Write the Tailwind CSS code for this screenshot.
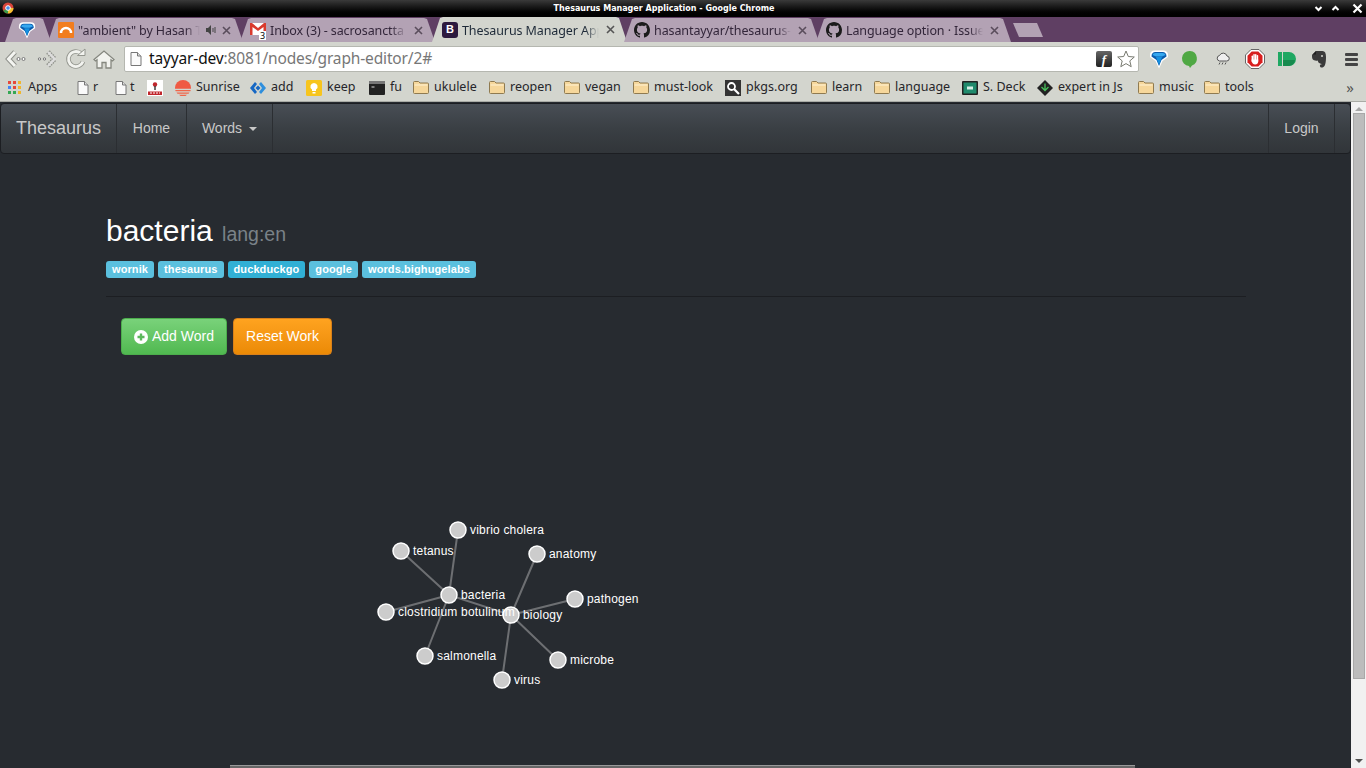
<!DOCTYPE html>
<html lang="en">
<head>
    <meta charset="UTF-8">
    <title>Thesaurus Manager Application</title>
    <script src="https://cdn.jsdelivr.net/npm/@tailwindcss/browser@4"></script>
</head>
<body class="w-[1366px] h-[768px] overflow-hidden bg-[#272b30] font-['Noto_Sans',sans-serif]">
    <svg class="hidden">
        <symbol id="folder" viewBox="0 0 16 16">
            <path d="M.5 12.500v-10a1 1 0 0 1 1-1h4l1.500 1.500h7.500a1 1 0 0 1 1 1v8.500a1 1 0 0 1-1 1h-13a1 1 0 0 1-1-1z" fill="#f6d79b" stroke="#8f7a50"/>
            <path d="M1.500 5h13" stroke="#fff2d4"/>
        </symbol>
        <symbol id="page" viewBox="0 0 16 16">
            <path d="M3 1.500h6.500l3.500 3.500v9.500h-10z" fill="#fafafa" stroke="#777"/>
            <path d="M9.500 1.500v3.500h3.500" fill="#ddd" stroke="#777"/>
        </symbol>
        <symbol id="github" viewBox="0 0 16 16">
            <path fill="#1b1b1b" d="M8 0C3.580 0 0 3.580 0 8c0 3.540 2.290 6.530 5.470 7.590.4.070.55-.17.55-.38 0-.19-.01-.82-.01-1.490-2.010.37-2.530-.49-2.690-.94-.09-.23-.48-.94-.82-1.130-.28-.15-.68-.52-.01-.53.63-.01 1.080.58 1.230.82.720 1.210 1.870.87 2.330.66.070-.52.280-.87.510-1.070-1.780-.2-3.640-.89-3.640-3.950 0-.87.310-1.590.820-2.150-.080-.2-.360-1.020.080-2.120 0 0 .67-.21 2.200.82.640-.18 1.320-.27 2-.27s1.360.09 2 .27c1.530-1.040 2.200-.82 2.200-.82.440 1.100.160 1.920.080 2.120.510.560.820 1.270.820 2.150 0 3.070-1.870 3.750-3.650 3.950.290.250.540.730.540 1.480 0 1.070-.010 1.930-.010 2.200 0 .210.150.460.550.380A8.010 8.010 0 0 0 16 8c0-4.420-3.580-8-8-8z"/>
        </symbol>
        <symbol id="gem" viewBox="0 0 20 20">
            <path d="M10 19.500L6.500 12 1 8V6q0-4.500 5-4.500h8q5 0 5 4.500v2l-5.500 4z" fill="#fff"/>
            <path d="M10 17L7.500 11 2.500 7.500q0-4.500 4-4.500h7q4 0 4 4.500L12.500 11z" fill="#0b5cad"/>
            <path d="M3.500 6q.5-2 3-2h7q2.500 0 3 2l-3.500 1.500h-6z" fill="#35a8f0"/>
            <path d="M7 8h6l-3 8z" fill="#1590e0"/>
        </symbol>
    </svg>

    <!-- title bar -->
    <div class="relative flex h-[17px] items-center justify-center bg-gradient-to-b from-[#3a3a3a] via-[#111] to-[#000] pr-[38px] font-['DejaVu_Sans',sans-serif] text-[8px] font-bold text-white">
        <svg class="absolute left-[2px] top-[2px] size-[12px]" viewBox="0 0 12 12">
            <circle cx="6" cy="6" r="5.500" fill="#d9453a"/>
            <path d="M6 6L1.200 8.800A5.500 5.500 0 0 0 6 11.500z" fill="#3a9a4a"/>
            <path d="M6 6v5.500A5.500 5.500 0 0 0 11.500 6z" fill="#f2c230"/>
            <circle cx="6" cy="6" r="2.300" fill="#4a8ee8" stroke="#fff"/>
        </svg>
        <span>Thesaurus Manager Application - Google Chrome</span>
        <div class="absolute right-[3px] top-[3px] flex items-center gap-[8px]">
            <svg class="size-[9px]" viewBox="0 0 9 9"><path d="M1.500 3l3 3 3-3" fill="none" stroke="#fff" stroke-width="2"/></svg>
            <svg class="size-[9px]" viewBox="0 0 9 9"><path d="M1.500 6l3-3 3 3" fill="none" stroke="#fff" stroke-width="2"/></svg>
            <svg class="ml-[4px] size-[11px]" viewBox="0 0 11 11"><path d="M1.500 1.500l8 8m0-8l-8 8" fill="none" stroke="#fff" stroke-width="2.200"/></svg>
        </div>
    </div>

    <!-- tab strip -->
    <div class="flex h-[25px] items-end bg-[#5f3f63] pl-[5px] text-[12.500px] tracking-[-0.1px] text-[#33263a]">
        <div class="flex h-[24px] w-[46px] items-center justify-center bg-[#b3a2b4] [clip-path:polygon(0_100%,8px_4%,11px_0,calc(100%-11px)_0,calc(100%-8px)_4%,100%_100%)]">
            <svg class="-ml-[2px] size-[18px]"><use href="#gem"/></svg>
        </div>
        <div class="-ml-[3px] flex h-[24px] w-[195px] items-center bg-[#b3a2b4] pl-[10px] [clip-path:polygon(0_100%,8px_4%,11px_0,calc(100%-11px)_0,calc(100%-8px)_4%,100%_100%)]">
            <svg class="mr-[4px] size-[16px] shrink-0" viewBox="0 0 16 16">
                <rect width="16" height="16" rx="1" fill="#f27d1e"/>
                <path d="M3 11a5 5 0 0 1 10 0" fill="none" stroke="#fff" stroke-width="2.500"/>
            </svg>
            <span class="mt-[2px] w-[122px] overflow-hidden whitespace-nowrap [mask-image:linear-gradient(to_right,#000_88%,transparent)]">"ambient" by Hasan T</span>
            <svg class="ml-[5px] size-[12px] shrink-0" viewBox="0 0 12 12"><path d="M1 4h2l3-3v10l-3-3H1z" fill="#444"/><path d="M8 4v4m2-5v6" stroke="#444"/></svg>
            <svg class="ml-[5px] size-[9px] shrink-0" viewBox="0 0 9 9"><path d="M1 1l7 7m0-7l-7 7" stroke="#5a4d5c" stroke-width="1.600"/></svg>
        </div>
        <div class="-ml-[3px] flex h-[24px] w-[195px] items-center bg-[#b3a2b4] pl-[10px] [clip-path:polygon(0_100%,8px_4%,11px_0,calc(100%-11px)_0,calc(100%-8px)_4%,100%_100%)]">
            <div class="relative mr-[4px] size-[16px] shrink-0">
                <svg class="size-[16px]" viewBox="0 0 16 16"><rect y="1" width="16" height="12" fill="#fff"/><path d="M0 1v12h2.500V5L8 9l5.500-4v8H16V1h-2L8 6 2 1z" fill="#d93a2e"/></svg>
                <span class="absolute -bottom-[2px] right-0 bg-white px-[1px] text-[9px] leading-[9px] text-black">3</span>
            </div>
            <span class="mt-[2px] w-[137px] overflow-hidden whitespace-nowrap [mask-image:linear-gradient(to_right,#000_88%,transparent)]">Inbox (3) - sacrosanctta</span>
            <svg class="ml-[7px] size-[9px] shrink-0" viewBox="0 0 9 9"><path d="M1 1l7 7m0-7l-7 7" stroke="#5a4d5c" stroke-width="1.600"/></svg>
        </div>
        <div class="-ml-[3px] flex h-[25px] w-[195px] items-center bg-[#d3d5ce] pl-[10px] text-[#1e2a38] [clip-path:polygon(0_100%,8px_4%,11px_0,calc(100%-11px)_0,calc(100%-8px)_4%,100%_100%)]">
            <span class="mr-[4px] flex size-[16px] shrink-0 items-center justify-center rounded-[3px] bg-[#2d1a3f] font-['Liberation_Sans',sans-serif] text-[11px] font-bold text-white">B</span>
            <span class="mt-[3px] w-[137px] overflow-hidden whitespace-nowrap [mask-image:linear-gradient(to_right,#000_90%,transparent)]">Thesaurus Manager App</span>
            <svg class="ml-[7px] size-[9px] shrink-0" viewBox="0 0 9 9"><path d="M1 1l7 7m0-7l-7 7" stroke="#555" stroke-width="1.600"/></svg>
        </div>
        <div class="-ml-[3px] flex h-[24px] w-[195px] items-center bg-[#b3a2b4] pl-[10px] [clip-path:polygon(0_100%,8px_4%,11px_0,calc(100%-11px)_0,calc(100%-8px)_4%,100%_100%)]">
            <svg class="mr-[4px] size-[16px] shrink-0"><use href="#github"/></svg>
            <span class="mt-[2px] w-[137px] overflow-hidden whitespace-nowrap [mask-image:linear-gradient(to_right,#000_90%,transparent)]">hasantayyar/thesaurus-m</span>
            <svg class="ml-[7px] size-[9px] shrink-0" viewBox="0 0 9 9"><path d="M1 1l7 7m0-7l-7 7" stroke="#5a4d5c" stroke-width="1.600"/></svg>
        </div>
        <div class="-ml-[3px] flex h-[24px] w-[195px] items-center bg-[#b3a2b4] pl-[10px] [clip-path:polygon(0_100%,8px_4%,11px_0,calc(100%-11px)_0,calc(100%-8px)_4%,100%_100%)]">
            <svg class="mr-[4px] size-[16px] shrink-0"><use href="#github"/></svg>
            <span class="mt-[2px] w-[137px] overflow-hidden whitespace-nowrap [mask-image:linear-gradient(to_right,#000_90%,transparent)]">Language option · Issue</span>
            <svg class="ml-[7px] size-[9px] shrink-0" viewBox="0 0 9 9"><path d="M1 1l7 7m0-7l-7 7" stroke="#5a4d5c" stroke-width="1.600"/></svg>
        </div>
        <div class="mb-[5px] ml-[2px] h-[14px] w-[30px] bg-[#b3a2b4] [clip-path:polygon(6px_100%,0_0,calc(100%-6px)_0,100%_100%)]"></div>
    </div>

    <!-- toolbar -->
    <div class="flex h-[32px] items-center bg-[#d3d5ce] pl-[5px] pt-[2px]">
        <svg class="size-[22px]" viewBox="0 0 22 22" fill="none"><path d="M10 4l-6.500 7 6.500 7" stroke="#8f918b" stroke-width="5"/><path d="M10 4l-6.500 7 6.500 7" stroke="#f4f5f1" stroke-width="3"/><circle cx="13.500" cy="11" r="1.500" fill="#fff" stroke="#777"/><circle cx="18.500" cy="11" r="1.500" fill="#fff" stroke="#777"/></svg>
        <svg class="ml-[9px] size-[22px]" viewBox="0 0 22 22" fill="none"><path d="M12 4l6.500 7-6.500 7" stroke="#8f918b" stroke-width="5" stroke-dasharray="1.500 1"/><path d="M12 4l6.500 7-6.500 7" stroke="#ddd" stroke-width="2.500"/><circle cx="3.500" cy="11" r="1.200" fill="#eee" stroke="#777"/><circle cx="8.500" cy="11" r="1.200" fill="#eee" stroke="#777"/></svg>
        <svg class="ml-[7px] size-[22px]" viewBox="0 0 22 22" fill="none"><path d="M18 13.500A7.500 7.500 0 1 1 16 5.500" stroke="#94968f" stroke-width="4.500"/><path d="M18 13.500A7.500 7.500 0 1 1 16 5.500" stroke="#f2f3ef" stroke-width="2.800"/><path d="M12.500 7.500h7.500V1z" fill="#f2f3ef" stroke="#94968f"/></svg>
        <svg class="ml-[6px] size-[22px]" viewBox="0 0 22 22" fill="none"><path d="M1 11.500L11 3l10 8.500-1.500 1.500L18 11.800V20h-5v-5.500H9V20H4v-8.200L2.500 13z" fill="#f2f3ef" stroke="#85877f" stroke-width="1.300"/></svg>
        <div class="ml-[9px] flex h-[26px] w-[1015px] items-center rounded-[2px] border border-[#b5b7b0] bg-white pl-[3px] pr-[3px]">
            <svg class="size-[16px] shrink-0"><use href="#page"/></svg>
            <span class="ml-[5px] whitespace-nowrap text-[15.500px] tracking-[-0.15px] text-[#111]">tayyar-dev<span class="text-[#777]">:8081/nodes/graph-editor/2#</span></span>
            <span class="ml-auto flex size-[16px] items-center justify-center rounded-[2px] bg-gradient-to-b from-[#666] to-[#222] font-['Liberation_Serif',serif] text-[13px] font-bold italic leading-none text-white">f</span>
            <svg class="ml-[5px] size-[18px]" viewBox="0 0 18 18"><path d="M9 1l2.300 5.500 6 .5-4.500 3.900 1.400 5.800L9 13.600l-5.200 3.100 1.400-5.800L.7 7l6-.5z" fill="#fff" stroke="#77796f"/></svg>
        </div>
        <svg class="ml-[10px] size-[20px]"><use href="#gem"/></svg>
        <svg class="ml-[12px] size-[18px]" viewBox="0 0 18 18"><path d="M9 1a7.500 7.500 0 0 0-1 15l1 2 2-2.500A7.500 7.500 0 0 0 9 1z" fill="#4fa843"/></svg>
        <svg class="ml-[17px] size-[14px]" viewBox="0 0 14 14" fill="none"><path d="M3.500 9h7a2.500 2.500 0 0 0 .5-5 4 4 0 0 0-7.500-.5A2.800 2.800 0 0 0 3.500 9z" fill="#eee" stroke="#555"/><path d="M4 10.500l-1 2m4-2l-1 2m4-2l-1 2" stroke="#555"/></svg>
        <svg class="ml-[15px] size-[20px]" viewBox="0 0 20 20">
            <path d="M6 .5h8L19.500 6v8L14 19.500H6L.5 14V6z" fill="#fff" stroke="#666"/>
            <path d="M6.700 2.500h6.600l4.200 4.200v6.600l-4.200 4.200H6.700l-4.200-4.200V6.700z" fill="#d81e1e"/>
            <g fill="#fff"><rect x="6.600" y="6.500" width="1.500" height="6" rx=".7"/><rect x="8.300" y="5" width="1.500" height="7" rx=".7"/><rect x="10" y="5" width="1.500" height="7" rx=".7"/><rect x="11.700" y="6" width="1.500" height="7" rx=".7"/><path d="M6.600 10.500h6.600v2c0 2-1.300 3-3 3-2 0-2.700-1-3.600-3z"/></g>
        </svg>
        <svg class="ml-[12px] size-[20px]" viewBox="0 0 20 20"><path d="M1 3h4v14H1zM6 3h6a7 7 0 0 1 0 14H6z" fill="#1fa862"/><path d="M6 11h12a7 7 0 0 1-6 6H6z" fill="#178a4e"/></svg>
        <svg class="ml-[13px] size-[18px]" viewBox="0 0 18 18"><path d="M2.500 4.500L6 1h6.500C15 1 16 3 16 7c0 4.500-.5 10-3.500 10.500-2 .3-3-1-2.500-2.300.4-1 1.500-1 2.300-.5-.3-1.200-2.500-1-3.600-2-.5-.5-.7-1.500-.9-2.200-1.800.4-4.300.2-5.300-1.500-.5-1-.5-3-.5-4.500z" fill="#3a3a3a"/><path d="M6 1v3.500H2.500z" fill="#1e1e1e"/><circle cx="12" cy="6" r="1" fill="#d3d5ce"/></svg>
        <div class="ml-[17px] flex w-[13px] flex-col gap-[2px]">
            <span class="h-[3px] rounded-[1px] bg-[#444]"></span>
            <span class="h-[3px] rounded-[1px] bg-[#444]"></span>
            <span class="h-[3px] rounded-[1px] bg-[#444]"></span>
        </div>
    </div>

    <!-- bookmarks bar -->
    <div class="flex h-[28px] items-center border-b border-[#a9aba5] bg-[#d3d5ce] pl-[8px] text-[12.500px] text-[#26262a]">
        <div class="flex w-[67px] items-center gap-[7px]">
            <svg class="size-[13px]" viewBox="0 0 13 13">
                <rect width="3" height="3" fill="#e5483a"/><rect x="5" width="3" height="3" fill="#e5483a"/><rect x="10" width="3" height="3" fill="#f0b62c"/>
                <rect y="5" width="3" height="3" fill="#4285f4"/><rect x="5" y="5" width="3" height="3" fill="#e5483a"/><rect x="10" y="5" width="3" height="3" fill="#f0b62c"/>
                <rect y="10" width="3" height="3" fill="#34a853"/><rect x="5" y="10" width="3" height="3" fill="#34a853"/><rect x="10" y="10" width="3" height="3" fill="#f0b62c"/>
            </svg>
            <span>Apps</span>
        </div>
        <div class="flex w-[38px] items-center gap-[2px]"><svg class="size-[16px]"><use href="#page"/></svg><span>r</span></div>
        <div class="flex w-[34px] items-center gap-[1px]"><svg class="size-[16px]"><use href="#page"/></svg><span>t</span></div>
        <svg class="size-[16px]" viewBox="0 0 16 16"><rect width="16" height="16" fill="#fff"/><circle cx="8" cy="4.500" r="2.200" fill="#c0272d"/><path d="M7.300 6h1.400v4H7.300z" fill="#333"/><path d="M1 11.500h14V15H1z" fill="#c0272d"/><path d="M3 13h10" stroke="#fff" stroke-dasharray="2 1"/></svg>
        <div class="ml-[12px] flex w-[75px] items-center gap-[5px]">
            <svg class="size-[16px]" viewBox="0 0 16 16"><path d="M0 8a8 8 0 0 1 16 0v.800H0z" fill="#ef5a43"/><path d="M.2 10h15.600l-.5 1.300H.7zM1.500 12.500h13l-1 1.200h-11zM4 14.700h8L10.500 16h-5z" fill="#f0664a"/></svg>
            <span>Sunrise</span>
        </div>
        <div class="flex w-[55px] items-center gap-[5px]">
            <svg class="size-[16px]" viewBox="0 0 16 16"><path d="M5 2L0 8l5 6 2-2-3-4 3-4z" fill="#1668c4"/><path d="M11 2l5 6-5 6-2-2 3-4-3-4z" fill="#2e8fdd"/><path d="M8 5.500L10.500 8 8 10.500 5.500 8z" fill="#1668c4"/></svg>
            <span>add</span>
        </div>
        <div class="ml-[1px] flex w-[63px] items-center gap-[5px]">
            <svg class="size-[16px]" viewBox="0 0 16 16"><rect width="16" height="16" rx="1.500" fill="#f7c51d"/><path d="M8 3a3.600 3.600 0 0 0-2 6.600V11h4V9.600A3.600 3.600 0 0 0 8 3zM6.500 12h3v1.500h-3z" fill="#fff"/></svg>
            <span>keep</span>
        </div>
        <div class="flex w-[44px] items-center gap-[5px]">
            <svg class="size-[16px]" viewBox="0 0 16 16"><rect y="1" width="16" height="14" rx="1" fill="#222"/><rect y="1" width="16" height="3" fill="#777"/><path d="M2.500 6.500h3v1h-3z" fill="#ddd"/></svg>
            <span>fu</span>
        </div>
        <div class="flex w-[76px] items-center gap-[5px]"><svg class="size-[16px]"><use href="#folder"/></svg><span>ukulele</span></div>
        <div class="flex w-[75px] items-center gap-[5px]"><svg class="size-[16px]"><use href="#folder"/></svg><span>reopen</span></div>
        <div class="flex w-[69px] items-center gap-[5px]"><svg class="size-[16px]"><use href="#folder"/></svg><span>vegan</span></div>
        <div class="flex w-[92px] items-center gap-[5px]"><svg class="size-[16px]"><use href="#folder"/></svg><span>must-look</span></div>
        <div class="flex w-[86px] items-center gap-[5px]">
            <svg class="size-[16px]" viewBox="0 0 16 16"><rect width="16" height="16" fill="#333"/><circle cx="6.500" cy="6.500" r="3.500" fill="none" stroke="#fff" stroke-width="1.800"/><path d="M9 9l5 5" stroke="#fff" stroke-width="2.200"/></svg>
            <span>pkgs.org</span>
        </div>
        <div class="flex w-[63px] items-center gap-[5px]"><svg class="size-[16px]"><use href="#folder"/></svg><span>learn</span></div>
        <div class="flex w-[88px] items-center gap-[5px]"><svg class="size-[16px]"><use href="#folder"/></svg><span>language</span></div>
        <div class="flex w-[75px] items-center gap-[5px]">
            <svg class="size-[16px]" viewBox="0 0 16 16"><rect y="1" width="16" height="14" rx="1" fill="#222"/><rect x="1.500" y="2.500" width="13" height="11" fill="#1f8a6c"/><rect x="5" y="6.500" width="6" height="3" fill="#d5efe6"/></svg>
            <span>S. Deck</span>
        </div>
        <div class="flex w-[101px] items-center gap-[5px]">
            <svg class="size-[16px]" viewBox="0 0 16 16"><path d="M8 0l8 8-8 8-8-8z" fill="#222"/><path d="M4.500 7L8 10.500 11.500 7M8 3.500v7" fill="none" stroke="#49c15c" stroke-width="1.300"/></svg>
            <span class="whitespace-nowrap">expert in Js</span>
        </div>
        <div class="flex w-[66px] items-center gap-[5px]"><svg class="size-[16px]"><use href="#folder"/></svg><span>music</span></div>
        <div class="flex items-center gap-[5px]"><svg class="size-[16px]"><use href="#folder"/></svg><span>tools</span></div>
        <span class="ml-auto mr-[12px] text-[15px] leading-none text-[#555]">»</span>
    </div>

    <!-- page + scrollbar -->
    <div class="flex h-[666px] font-['Liberation_Sans',sans-serif]">
        <main class="relative w-[1351px] overflow-hidden bg-[#272b30] pt-[1px]">
            <nav class="flex h-[51px] rounded-[4px] border border-[#1c1e22] bg-gradient-to-b from-[#484e55] via-[#3a3f44] to-[#313539] text-[14px] text-[#c8c8c8]">
                <a class="flex w-[116px] items-center border-r border-[#2b2e32] pl-[15px] text-[18px]">Thesaurus</a>
                <a class="flex w-[70px] items-center justify-center border-r border-[#2b2e32]">Home</a>
                <a class="flex w-[86px] items-center justify-center gap-[7px] border-r border-[#2b2e32]">Words <span class="mt-[1px] border-x-4 border-t-4 border-x-transparent border-t-[#c8c8c8]"></span></a>
                <a class="ml-auto mr-[15px] flex w-[67px] items-center justify-center border-x border-[#2b2e32]">Login</a>
            </nav>

            <div class="ml-[106px] w-[1140px] pt-[59px]">
                <h1 class="text-[30px] leading-[36px] text-white">bacteria <small class="ml-[1px] text-[19.500px] text-[#7a8288]">lang:en</small></h1>
                <div class="mt-[9px] flex gap-[4px] text-[11px] font-bold leading-[17px] tracking-[0.1px] text-white">
                    <span class="rounded-[3px] bg-[#5bc0de] px-[6px]">wornik</span>
                    <span class="rounded-[3px] bg-[#5bc0de] px-[6px]">thesaurus</span>
                    <span class="rounded-[3px] bg-[#31b0d5] px-[6px]">duckduckgo</span>
                    <span class="rounded-[3px] bg-[#5bc0de] px-[6px]">google</span>
                    <span class="rounded-[3px] bg-[#5bc0de] px-[6px]">words.bighugelabs</span>
                </div>
                <hr class="mt-[18px] border-[#1c1e22]">
                <div class="ml-[15px] mt-[21px] flex gap-[6px] text-[14px] text-white">
                    <button class="flex h-[37px] w-[106px] items-center justify-center gap-[4px] rounded-[4px] border border-[#4cae4c] bg-gradient-to-b from-[#79d27a] to-[#50b950]">
                        <svg class="size-[14px]" viewBox="0 0 14 14"><circle cx="7" cy="7" r="7" fill="#fff"/><path d="M7 3.500v7M3.500 7h7" stroke="#5cb85c" stroke-width="2.400"/></svg>
                        Add Word
                    </button>
                    <button class="h-[37px] w-[99px] rounded-[4px] border border-[#d9801a] bg-gradient-to-b from-[#ffa31f] to-[#eb8a05]">Reset Work</button>
                </div>
            </div>

            <!-- force graph -->
            <svg class="absolute left-0 top-0 font-['Liberation_Sans',sans-serif]" width="1351" height="666" viewBox="0 102 1351 666">
                <g stroke="#6d6f72" stroke-width="2">
                    <path d="M449 595L458 530M449 595L401 551M449 595L386 612M449 595L425 656M449 595L511 615"/>
                    <path d="M511 615L537 554M511 615L575 599M511 615L558 660M511 615L502 680"/>
                </g>
                <g fill="#ccc" stroke="#fff" stroke-width="1.500">
                    <circle cx="511" cy="615" r="8"/>
                    <circle cx="449" cy="595" r="8"/>
                    <circle cx="458" cy="530" r="8"/>
                    <circle cx="401" cy="551" r="8"/>
                    <circle cx="386" cy="612" r="8"/>
                    <circle cx="425" cy="656" r="8"/>
                    <circle cx="537" cy="554" r="8"/>
                    <circle cx="575" cy="599" r="8"/>
                    <circle cx="558" cy="660" r="8"/>
                    <circle cx="502" cy="680" r="8"/>
                </g>
                <g fill="#fff" font-size="12" letter-spacing="0.2">
                    <text x="461" y="599">bacteria</text>
                    <text x="523" y="619">biology</text>
                    <text x="470" y="534">vibrio cholera</text>
                    <text x="413" y="555">tetanus</text>
                    <text x="398" y="616">clostridium botulinum</text>
                    <text x="437" y="660">salmonella</text>
                    <text x="549" y="558">anatomy</text>
                    <text x="587" y="603">pathogen</text>
                    <text x="570" y="664">microbe</text>
                    <text x="514" y="684">virus</text>
                </g>
            </svg>

            <!-- top edge of the next block, cut off by the window -->
            <div class="absolute bottom-0 left-[230px] h-[3px] w-[905px] border-t border-[#999] bg-[#666]"></div>
        </main>

        <aside class="flex w-[15px] flex-col items-center bg-[#f1f1f1]">
            <span class="mt-[5px] border-x-[4px] border-b-[4px] border-x-transparent border-b-[#a5a5a5]"></span>
            <div class="mx-[1px] mt-[2px] h-[566px] w-[12px] border border-[#a8a8a8] bg-[#bcbcbc]"></div>
            <span class="mt-auto mb-[5px] border-x-[4px] border-t-[4px] border-x-transparent border-t-[#505050]"></span>
        </aside>
    </div>
</body>
</html>
